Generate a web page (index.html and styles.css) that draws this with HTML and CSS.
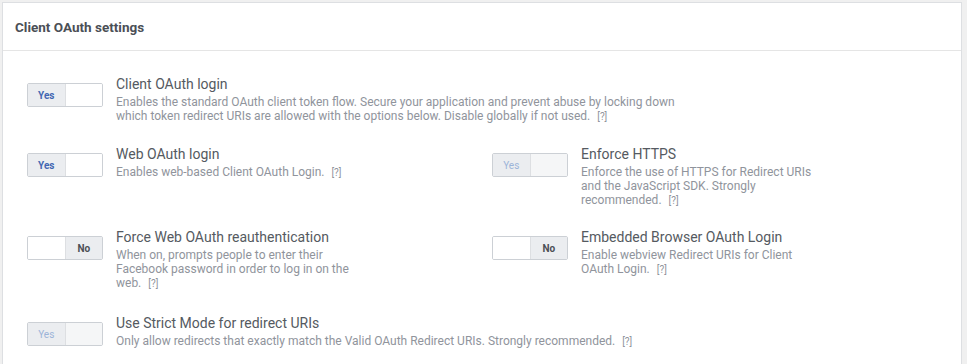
FILE: index.html
```html
<!DOCTYPE html>
<html lang="en">

<head>
    <meta charset="UTF-8">
    <meta name="viewport" content="width=device-width, initial-scale=1.0">
    <title>Client OAuth settings</title>
    <link rel="stylesheet" href="styles.css">
</head>

<body>

    <div class="panel">
        <div class="panel-header">Client OAuth settings</div>

        <div class="panel-body">
            <!-- Full width row -->
            <div class="setting full">
                <div class="toggle on">
                    <span class="half active">Yes</span>
                    <span class="half"></span>
                </div>
                <div class="setting-text">
                    <div class="setting-title">Client OAuth login</div>
                    <div class="setting-desc">Enables the standard OAuth client token flow. Secure your application
                        and prevent abuse by locking down which token redirect URIs are allowed with the options
                        below. Disable globally if not used. <span class="help">[?]</span></div>
                </div>
            </div>

            <!-- Two column rows -->
            <div class="setting-grid">
                <div class="setting">
                    <div class="toggle on">
                        <span class="half active">Yes</span>
                        <span class="half"></span>
                    </div>
                    <div class="setting-text">
                        <div class="setting-title">Web OAuth login</div>
                        <div class="setting-desc">Enables web-based Client OAuth Login. <span class="help">[?]</span></div>
                    </div>
                </div>

                <div class="setting">
                    <div class="toggle on disabled">
                        <span class="half active">Yes</span>
                        <span class="half"></span>
                    </div>
                    <div class="setting-text">
                        <div class="setting-title">Enforce HTTPS</div>
                        <div class="setting-desc">Enforce the use of HTTPS for Redirect URIs and the JavaScript SDK.
                            Strongly recommended. <span class="help">[?]</span></div>
                    </div>
                </div>

                <div class="setting">
                    <div class="toggle off">
                        <span class="half"></span>
                        <span class="half active">No</span>
                    </div>
                    <div class="setting-text">
                        <div class="setting-title">Force Web OAuth reauthentication</div>
                        <div class="setting-desc">When on, prompts people to enter their Facebook password in order
                            to log in on the web. <span class="help">[?]</span></div>
                    </div>
                </div>

                <div class="setting">
                    <div class="toggle off">
                        <span class="half"></span>
                        <span class="half active">No</span>
                    </div>
                    <div class="setting-text">
                        <div class="setting-title">Embedded Browser OAuth Login</div>
                        <div class="setting-desc">Enable webview Redirect URIs for Client OAuth Login.
                            <span class="help">[?]</span></div>
                    </div>
                </div>
            </div>

            <div class="setting full">
                <div class="toggle on disabled">
                    <span class="half active">Yes</span>
                    <span class="half"></span>
                </div>
                <div class="setting-text">
                    <div class="setting-title">Use Strict Mode for redirect URIs</div>
                    <div class="setting-desc">Only allow redirects that exactly match the Valid OAuth Redirect URIs.
                        Strongly recommended. <span class="help">[?]</span></div>
                </div>
            </div>
        </div>
    </div>

</body>

</html>
```

FILE: styles.css
```css
body {
    margin: 0;
    padding: 2px 5px 0 2px;
    background-color: #f0f0f0;
    font-family: Roboto, "Liberation Sans", sans-serif;
}

.panel {
    background-color: #fff;
    border: 1px solid #dddfe2;
    border-bottom: none;
    height: 362px;
    box-sizing: border-box;
}

.panel-header {
    height: 47px;
    padding-left: 12px;
    display: flex;
    align-items: center;
    border-bottom: 1px solid #e5e5e5;
    font-size: 13.5px;
    font-weight: bold;
    color: #4b4f56;
}

.panel-body {
    padding: 24px 24px 0 24px;
}

/* Setting rows */
.setting {
    display: flex;
    gap: 13px;
    margin-bottom: 20px;
}

.panel-body > .setting:first-child {
    margin-bottom: 21px;
}

.setting-grid {
    display: grid;
    grid-template-columns: 465px 465px;
}

.setting-grid .setting:nth-last-child(-n+2) {
    margin-bottom: 23px;
}

.setting-text {
    width: 236px;
}

.setting.full .setting-text {
    width: 566px;
}

.setting-title {
    font-size: 14px;
    line-height: 18px;
    color: #555a61;
}

.setting-desc {
    font-size: 12px;
    line-height: 14px;
    margin-top: 2px;
    color: #90949c;
}

.help {
    font-size: 10px;
    margin-left: 4px;
    color: #90949c;
}

/* Yes / No toggle */
.toggle {
    flex: none;
    display: flex;
    width: 76px;
    height: 24px;
    margin-top: 8px;
    box-sizing: border-box;
    border: 1px solid #ccd0d5;
    border-radius: 2px;
    overflow: hidden;
}

.toggle .half {
    flex: 1;
    display: flex;
    align-items: center;
    justify-content: center;
    font-size: 10px;
    font-weight: bold;
    background-color: #fff;
}

.toggle .half:first-child {
    border-right: 1px solid #dddfe2;
}

.toggle .half.active {
    background-color: #ebedf0;
}

.toggle.on .half.active {
    color: #4267b2;
}

.toggle.off .half.active {
    color: #4b4f56;
}

.toggle.disabled .half {
    background-color: #f5f6f7;
}

.toggle.disabled .half.active {
    background-color: #ebedf0;
    color: #9cb4d8;
    font-weight: normal;
}
```
